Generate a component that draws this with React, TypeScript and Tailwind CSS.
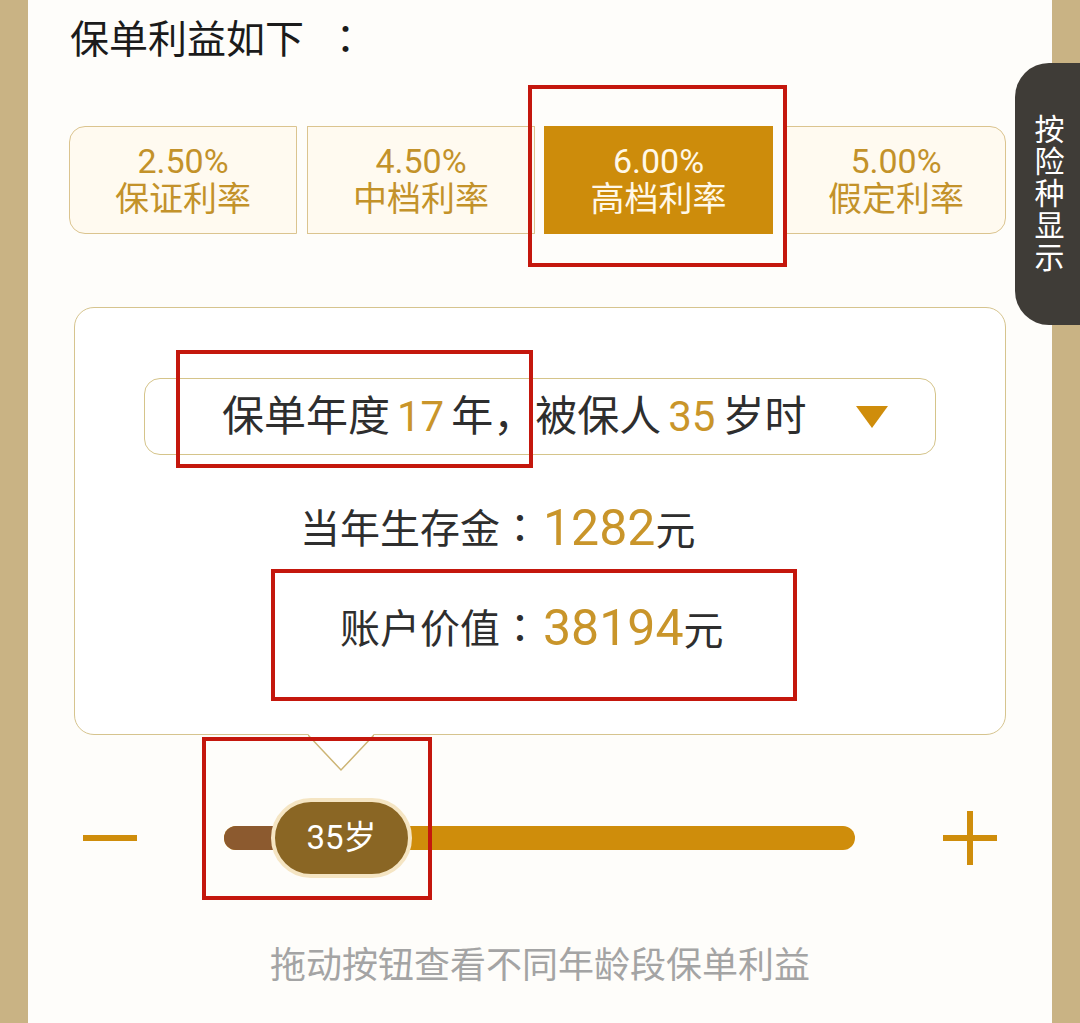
import React from "react";

// rate tabs across the top of the benefit panel
const RateTabs = () => {
  return (
    <div className="ml-[41px] mt-[62px] flex h-[108px]">
      <button className="flex w-[228px] flex-col items-center justify-center rounded-l-[16px] border border-[#dbc48f] bg-[#fffaf0] text-[34px] leading-[38px] text-[#c3922a]">
        <span>2.50%</span>
        <span>保证利率</span>
      </button>
      <button className="ml-[10px] flex w-[228px] flex-col items-center justify-center border border-[#dbc48f] bg-[#fffaf0] text-[34px] leading-[38px] text-[#c3922a]">
        <span>4.50%</span>
        <span>中档利率</span>
      </button>
      <button className="ml-[9px] flex w-[229px] flex-col items-center justify-center bg-[#cd8c0b] text-[34px] leading-[38px] text-[#fff8e8]">
        <span>6.00%</span>
        <span>高档利率</span>
      </button>
      <button className="ml-[13px] flex w-[220px] flex-col items-center justify-center rounded-r-[16px] border border-[#dbc48f] bg-[#fffaf0] text-[34px] leading-[38px] text-[#c3922a]">
        <span>5.00%</span>
        <span>假定利率</span>
      </button>
    </div>
  );
};

// label ends on the card's centre line, amount starts right after it
const ValueRow = ({ label, value }: { label: string; value: string }) => {
  return (
    <div className="flex h-[60px] items-center">
      <div className="w-1/2 text-right text-[40px] leading-[60px] text-[#2e2e2e]">
        {label}
        <span className="font-['Noto_Sans_CJK_JP',sans-serif] leading-none">：</span>
      </div>
      <div className="w-1/2 pl-[3px] text-[40px] leading-[60px] text-[#2e2e2e]">
        <span className="text-[50px] text-[#c9952a]">{value}</span>元
      </div>
    </div>
  );
};

const ResultCard = () => {
  return (
    <section className="relative ml-[46px] mt-[73px] h-[428px] w-[932px] rounded-[20px] border border-[#d6c48e] bg-white">
      <div className="mx-[69px] mt-[70px] flex h-[77px] items-center rounded-[16px] border border-[#d5c48a] pl-[77px] text-[42px] text-[#2e2e2e]">
        <span className="whitespace-nowrap">
          保单年度<span className="mx-[7px] text-[#c9952a]">17</span>年，被保人
          <span className="mx-[7px] text-[#c9952a]">35</span>岁时
        </span>
        <svg className="ml-[50px] shrink-0" width="32" height="22" viewBox="0 0 32 22">
          <polygon points="0,0 32,0 16,22" fill="#cf8d0b" />
        </svg>
      </div>

      <div className="mt-[45px]">
        <ValueRow label="当年生存金" value="1282" />
      </div>
      <div className="mt-[40px]">
        <ValueRow label="账户价值" value="38194" />
      </div>

      {/* pointer notch toward the slider thumb */}
      <svg className="absolute left-[233px] top-[426px]" width="66" height="38" viewBox="0 0 66 38">
        <polygon points="0,0 66,0 33,36" fill="#ffffff" />
        <polyline points="0,1 33,36 66,1" fill="none" stroke="#cdb575" strokeWidth="1.5" />
      </svg>
    </section>
  );
};

const AgeSlider = () => {
  return (
    <div className="mt-[63px] flex h-[80px] items-center">
      <div className="ml-[55px] h-[6px] w-[54px] bg-[#cf8d0b]" />
      <div className="relative ml-[87px] h-[24px] w-[631px] rounded-full bg-[#cf8d0b]">
        <div className="h-full w-[80px] rounded-l-full bg-[#8c5a2f]" />
        <div className="absolute left-[47px] top-[-28px] flex h-[80px] w-[141px] items-center justify-center rounded-full border-4 border-[#f5e5c3] bg-[#8a6624] text-[33px] text-white">
          35岁
        </div>
      </div>
      <div className="relative ml-[88px] h-[54px] w-[54px]">
        <div className="absolute left-0 top-[24px] h-[6px] w-[54px] bg-[#cf8d0b]" />
        <div className="absolute left-[24px] top-0 h-[54px] w-[6px] bg-[#cf8d0b]" />
      </div>
    </div>
  );
};

export default function App() {
  return (
    <div className="relative flex h-[1023px] w-[1080px] overflow-hidden bg-[#fefdfa] font-['Roboto','Noto_Sans_CJK_SC',sans-serif]">
      <div className="w-[28px] shrink-0 bg-[#c9b384]" />

      <main className="flex flex-1 flex-col">
        <h1 className="ml-[42px] mt-[16px] h-[48px] text-[39px] leading-[48px] text-[#1b1b1b]">
          保单利益如下<span className="ml-[22px] font-['Noto_Sans_CJK_JP',sans-serif] leading-none">：</span>
        </h1>
        <RateTabs />
        <ResultCard />
        <AgeSlider />
        <p className="mt-[63px] text-center text-[36px] leading-[50px] text-[#a4a4a4]">拖动按钮查看不同年龄段保单利益</p>
      </main>

      <div className="w-[28px] shrink-0 bg-[#c9b384]" />

      {/* side tab */}
      <div className="absolute left-[1015px] top-[63px] flex h-[262px] w-[65px] flex-col items-center justify-center rounded-l-[34px] bg-[#3f3c37] pl-[4px] text-[30px] leading-[32px] text-white">
        <span>按</span>
        <span>险</span>
        <span>种</span>
        <span>显</span>
        <span>示</span>
      </div>

      {/* highlight frames */}
      <div className="absolute left-[528px] top-[85px] h-[182px] w-[259px] border-4 border-[#c4170d]" />
      <div className="absolute left-[176px] top-[350px] h-[118px] w-[357px] border-4 border-[#c4170d]" />
      <div className="absolute left-[271px] top-[569px] h-[132px] w-[526px] border-4 border-[#c4170d]" />
      <div className="absolute left-[202px] top-[737px] h-[163px] w-[230px] border-4 border-[#c4170d]" />
    </div>
  );
}
